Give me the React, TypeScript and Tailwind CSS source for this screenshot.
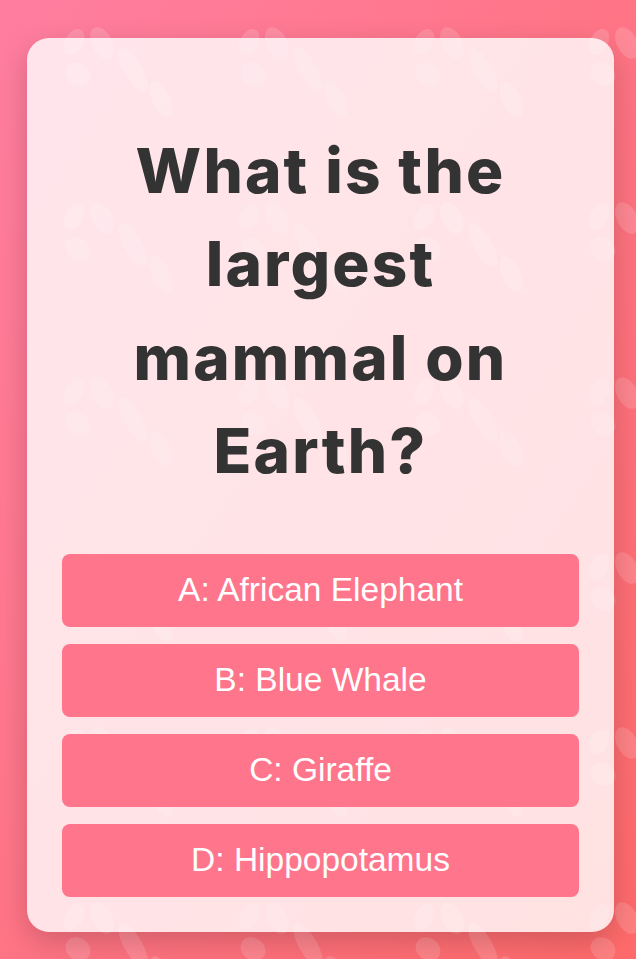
const answers = ['A: African Elephant', 'B: Blue Whale', 'C: Giraffe', 'D: Hippopotamus']
const questionLines = ['What is the', 'largest', 'mammal on', 'Earth?']

// petal tile repeated behind the card
const PetalPattern = () => (
  <svg className="pointer-events-none absolute inset-0 h-full w-full" aria-hidden="true">
    <defs>
      <pattern id="petals" x="0" y="0" width="175" height="175" patternUnits="userSpaceOnUse">
        <g transform="translate(65 27)" fill="#ffffff" fillOpacity="0.15">
          <ellipse cx="9" cy="15" rx="9" ry="14" transform="rotate(28 9 15)" />
          <ellipse cx="37" cy="16" rx="10" ry="17" transform="rotate(-28 37 16)" />
          <ellipse cx="13" cy="47" rx="13" ry="11" transform="rotate(35 13 47)" />
          <ellipse cx="68" cy="43" rx="9" ry="25" transform="rotate(-30 68 43)" />
          <ellipse cx="96" cy="72" rx="9" ry="19" transform="rotate(-25 96 72)" />
        </g>
      </pattern>
    </defs>
    <rect width="100%" height="100%" fill="url(#petals)" />
  </svg>
)

export default function App() {
  return (
    <div className="relative min-h-screen w-full overflow-hidden bg-linear-to-br from-[#ff7ea0] to-[#ff6a6a]">
      <PetalPattern />
      <div className="relative pt-[38px] pb-[27px] pl-[27px]">
        <div className="w-[587px] rounded-[22px] bg-white/80 px-[35px] pb-[35px] pt-[86px] shadow-[0_10px_30px_rgba(0,0,0,0.18)]">
          <h1 className="mb-[57px] text-center font-['Inter','Noto_Sans',sans-serif] text-[62px] font-extrabold leading-[93.3px] tracking-[0.035em] text-[#333333]">
            {questionLines.map((line) => (
              <span key={line} className="block">
                {line}
              </span>
            ))}
          </h1>
          <div className="flex flex-col gap-[17.5px]">
            {answers.map((answer) => (
              <button
                key={answer}
                className="w-full rounded-[8px] bg-[#ff758c] py-[17px] text-center font-['Liberation_Sans',Arial,sans-serif] text-[33.5px] leading-[38.5px] text-white"
              >
                {answer}
              </button>
            ))}
          </div>
        </div>
      </div>
    </div>
  )
}
